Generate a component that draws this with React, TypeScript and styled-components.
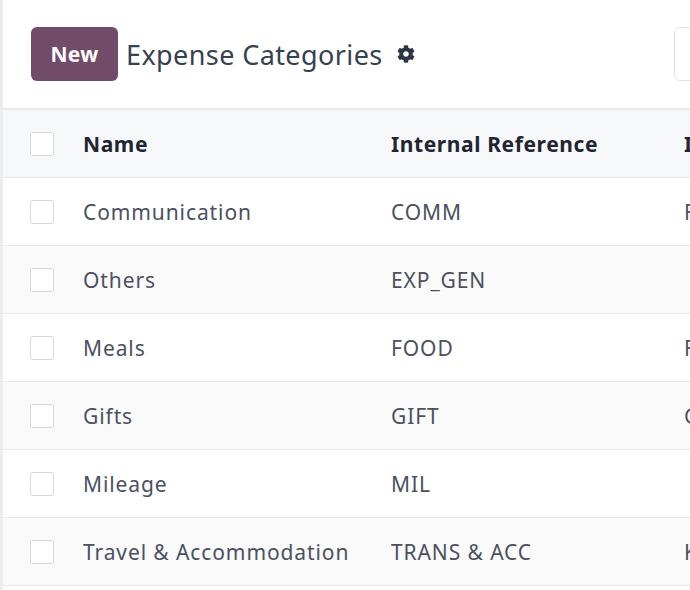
import styled, { createGlobalStyle } from "styled-components";
import { FaCog } from "react-icons/fa";

const GlobalStyle = createGlobalStyle`
  html, body {
    margin: 0;
    padding: 0;
    background: #ffffff;
  }
  body {
    font-family: "Noto Sans", "Open Sans", sans-serif;
  }
`;

const Page = styled.div`
  width: 690px;
  height: 590px;
  overflow: hidden;
  box-sizing: border-box;
  border-left: 3px solid #ececec;
  background: #ffffff;
`;

const ControlPanel = styled.div`
  display: flex;
  align-items: center;
  height: 108px;
  padding-left: 28px;
  border-bottom: 2px solid #e9ebee;
`;

const TitleGroup = styled.div`
  display: flex;
  align-items: center;
  flex: 0 0 643px;
`;

const NewButton = styled.button`
  width: 87px;
  height: 54px;
  border: none;
  border-radius: 6px;
  background: #714b67;
  color: #ffffff;
  font-family: inherit;
  font-size: 21px;
  font-weight: 700;
  letter-spacing: 0.3px;
  cursor: pointer;
`;

const Title = styled.h1`
  margin: 0 0 0 8px;
  font-size: 27px;
  font-weight: 400;
  letter-spacing: 0.4px;
  color: #364152;
`;

const Gear = styled.span`
  display: flex;
  margin-left: 14px;
  color: #2c3547;
  font-size: 18px;
`;

const SearchBox = styled.div`
  flex: 0 0 300px;
  height: 54px;
  box-sizing: border-box;
  border: 1px solid #e0e2e6;
  border-radius: 6px;
`;

const Row = styled.div<{ $bg: string }>`
  display: grid;
  grid-template-columns: 80px 308px 293px 200px;
  align-items: center;
  height: 67px;
  background: ${(p) => p.$bg};
  border-bottom: 1px solid #e6e8eb;
`;

const CheckCell = styled.div`
  display: flex;
  padding-left: 27px;
`;

const Checkbox = styled.span`
  width: 22px;
  height: 22px;
  border: 1.5px solid #d8dadd;
  border-radius: 2px;
  background: #ffffff;
`;

const Cell = styled.div<{ $head?: boolean }>`
  font-size: 21px;
  font-weight: ${(p) => (p.$head ? 700 : 400)};
  letter-spacing: ${(p) => (p.$head ? "0.6px" : "0.9px")};
  color: ${(p) => (p.$head ? "#1f2632" : "#4a5160")};
  white-space: nowrap;
  overflow: hidden;
`;

const rows = [
  { name: "Communication", ref: "COMM", extra: "Fixed" },
  { name: "Others", ref: "EXP_GEN", extra: "" },
  { name: "Meals", ref: "FOOD", extra: "Fixed" },
  { name: "Gifts", ref: "GIFT", extra: "Gift" },
  { name: "Mileage", ref: "MIL", extra: "" },
  { name: "Travel & Accommodation", ref: "TRANS & ACC", extra: "Km" },
];

export default function App() {
  return (
    <Page>
      <GlobalStyle />
      <ControlPanel>
        <TitleGroup>
          <NewButton>New</NewButton>
          <Title>Expense Categories</Title>
          <Gear>
            <FaCog />
          </Gear>
        </TitleGroup>
        <SearchBox />
      </ControlPanel>
      <Row $bg="#f7f8fa">
        <CheckCell>
          <Checkbox />
        </CheckCell>
        <Cell $head>Name</Cell>
        <Cell $head>Internal Reference</Cell>
        <Cell $head>Invoice</Cell>
      </Row>
      {rows.map((r, i) => (
        <Row key={r.name} $bg={i % 2 === 1 ? "#fafafa" : "#ffffff"}>
          <CheckCell>
            <Checkbox />
          </CheckCell>
          <Cell>{r.name}</Cell>
          <Cell>{r.ref}</Cell>
          <Cell>{r.extra}</Cell>
        </Row>
      ))}
    </Page>
  );
}
